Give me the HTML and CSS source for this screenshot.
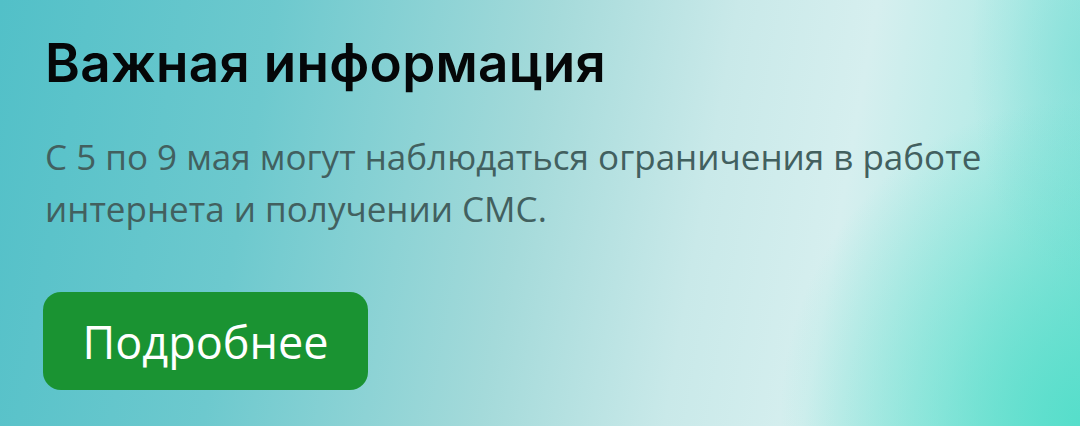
FILE: index.html
```html
<!DOCTYPE html>
<html lang="ru">
<head>
<meta charset="utf-8">
<link rel="stylesheet" href="styles.css">
</head>
<body>
<section class="banner">
  <h1 class="title">Важная информация</h1>
  <p class="text">С 5 по 9 мая могут наблюдаться ограничения в работе<br>интернета и получении СМС.</p>
  <button class="btn">Подробнее</button>
</section>
</body>
</html>
```
FILE: styles.css
```css
html, body {
  margin: 0;
  padding: 0;
}
body {
  width: 1080px;
  height: 426px;
  overflow: hidden;
}
.banner {
  box-sizing: border-box;
  width: 1080px;
  height: 426px;
  padding: 32px 0 0 45px;
  display: flex;
  flex-direction: column;
  align-items: flex-start;
  background:
    radial-gradient(ellipse 300px 320px at 1080px 420px, rgba(84,222,202,0.95), rgba(84,222,202,0) 100%),
    radial-gradient(ellipse 110px 220px at 1080px 60px, rgba(120,222,214,0.55), rgba(120,222,214,0) 100%),
    linear-gradient(100deg, #52c0c8 0%, #6dc9ce 24%, #a4dada 48%, #c9e9e9 64%, #d6efef 76%, #b6ebe7 88%, #86e1d8 100%);
  font-family: "Open Sans", "Noto Sans", sans-serif;
}
.title {
  margin: 0;
  font-family: Inter, "Noto Sans", sans-serif;
  font-weight: 600;
  font-size: 53px;
  line-height: 62px;
  color: #050708;
  letter-spacing: 0.3px;
}
.text {
  margin: 37px 0 0 0;
  font-size: 35px;
  line-height: 52px;
  color: #42605f;
}
.btn {
  margin: 57px 0 0 -2px;
  width: 325px;
  height: 98px;
  border: none;
  border-radius: 18px;
  background: #1a9332;
  color: #ffffff;
  font-family: "Open Sans", "Noto Sans", sans-serif;
  font-size: 45px;
  padding: 0;
  cursor: pointer;
}
```
